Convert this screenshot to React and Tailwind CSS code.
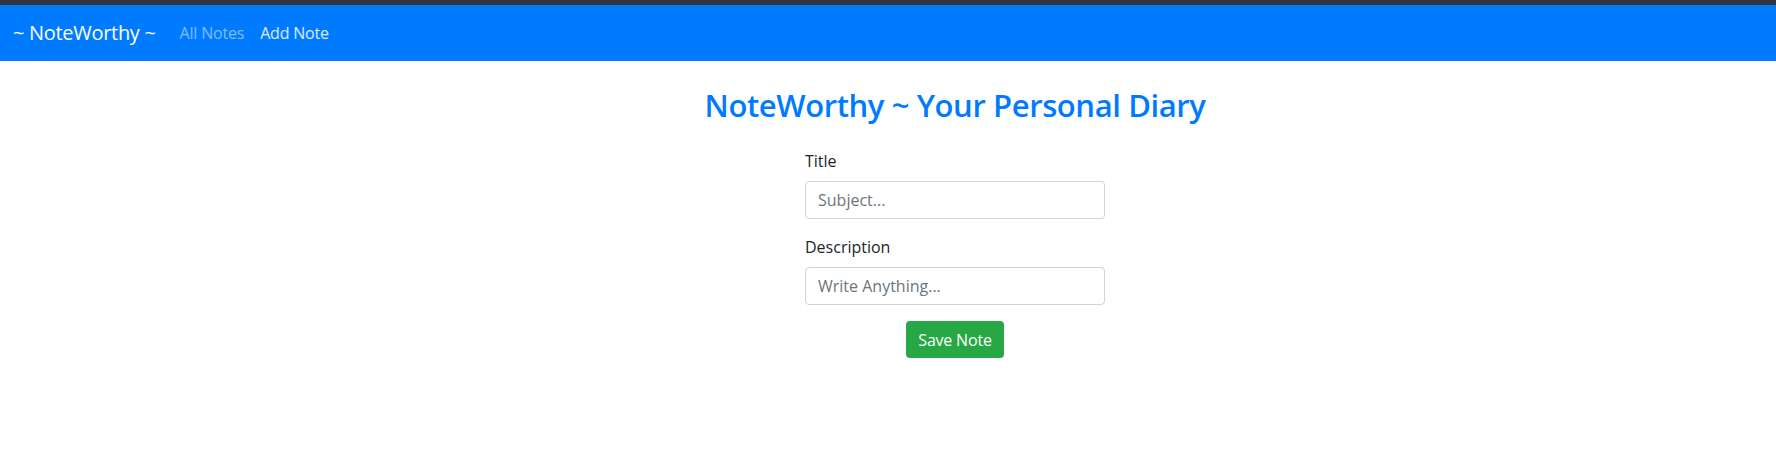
import React, { useState } from "react";

export default function App() {
  const [title, setTitle] = useState("");
  const [desc, setDesc] = useState("");

  return (
    <div className="min-h-screen bg-white font-['Segoe_UI','Open_Sans',sans-serif] text-[#212529]">
      {/* top strip */}
      <div className="h-[5px] bg-[#31333f]" />

      {/* NAVBAR */}
      <nav className="h-14 bg-[#007bff] flex items-center px-[13px]">
        <a href="#" className="text-xl leading-[30px] tracking-[-0.3px] text-white mr-4">
          ~ NoteWorthy ~
        </a>
        <a href="#" className="px-2 text-base tracking-[-0.2px] text-white/50">
          All Notes
        </a>
        <a href="#" className="px-2 text-base tracking-[-0.2px] text-white/85">
          Add Note
        </a>
      </nav>

      <main className="flex flex-col items-center pl-[134px]">
        <h2 className="mt-[25px] text-[31px] leading-[38px] font-semibold tracking-[-0.4px] text-[#007bff]">
          NoteWorthy ~ Your Personal Diary
        </h2>

        <form className="w-[300px] mt-[25px]" onSubmit={e => e.preventDefault()}>
          <div className="mb-4">
            <label className="block mb-2 text-base leading-6">Title</label>
            <input
              value={title}
              onChange={e => setTitle(e.target.value)}
              placeholder="Subject..."
              className="w-full h-[38px] px-3 border border-[#ced4da] rounded text-base placeholder:text-[#6c757d] outline-none"
            />
          </div>
          <div className="mb-4">
            <label className="block mb-2 text-base leading-6">Description</label>
            <input
              value={desc}
              onChange={e => setDesc(e.target.value)}
              placeholder="Write Anything..."
              className="w-full h-[38px] px-3 border border-[#ced4da] rounded text-base placeholder:text-[#6c757d] outline-none"
            />
          </div>
          <div className="flex justify-center">
            <button className="h-[37px] px-3 bg-[#28a745] text-white text-base tracking-[-0.2px] rounded">
              Save Note
            </button>
          </div>
        </form>
      </main>
    </div>
  );
}
